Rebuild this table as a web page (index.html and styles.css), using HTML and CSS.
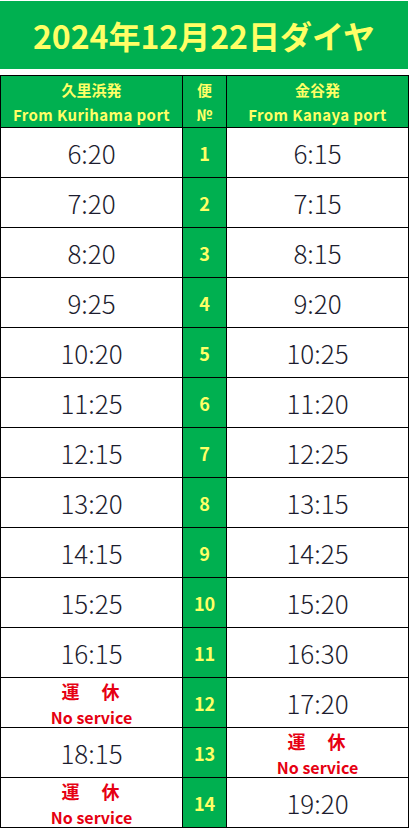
FILE: index.html
```html
<!DOCTYPE html>
<html lang="ja">
<head>
    <meta charset="UTF-8">
    <meta name="viewport" content="width=device-width, initial-scale=1.0">
    <title>2024年12月22日ダイヤ</title>
    <link rel="stylesheet" href="styles.css">
</head>
<body>
    <div class="title">2024年12月22日ダイヤ</div>
    <table class="timetable">
        <colgroup>
            <col class="col-side">
            <col class="col-no">
            <col class="col-side">
        </colgroup>
        <thead>
            <tr>
                <th><span class="jp">久里浜発</span><span class="en">From Kurihama port</span></th>
                <th><span class="jp">便</span><span class="en">№</span></th>
                <th><span class="jp">金谷発</span><span class="en">From Kanaya port</span></th>
            </tr>
        </thead>
        <tbody>
            <tr><td>6:20</td><td class="no">1</td><td>6:15</td></tr>
            <tr><td>7:20</td><td class="no">2</td><td>7:15</td></tr>
            <tr><td>8:20</td><td class="no">3</td><td>8:15</td></tr>
            <tr><td>9:25</td><td class="no">4</td><td>9:20</td></tr>
            <tr><td>10:20</td><td class="no">5</td><td>10:25</td></tr>
            <tr><td>11:25</td><td class="no">6</td><td>11:20</td></tr>
            <tr><td>12:15</td><td class="no">7</td><td>12:25</td></tr>
            <tr><td>13:20</td><td class="no">8</td><td>13:15</td></tr>
            <tr><td>14:15</td><td class="no">9</td><td>14:25</td></tr>
            <tr><td>15:25</td><td class="no">10</td><td>15:20</td></tr>
            <tr><td>16:15</td><td class="no">11</td><td>16:30</td></tr>
            <tr><td class="off"><span class="jp">運　休</span><span class="en">No service</span></td><td class="no">12</td><td>17:20</td></tr>
            <tr><td>18:15</td><td class="no">13</td><td class="off"><span class="jp">運　休</span><span class="en">No service</span></td></tr>
            <tr><td class="off"><span class="jp">運　休</span><span class="en">No service</span></td><td class="no">14</td><td>19:20</td></tr>
        </tbody>
    </table>
</body>
</html>
```

FILE: styles.css
```css
body { margin: 0; background: #fff; font-family: "Noto Sans CJK JP", "Noto Sans", sans-serif; width: 409px; }
.title { margin: 1px 0 6px; width: 408px; height: 68px; background: #00b050; color: #ffff66; font-size: 32px; font-weight: bold; display: flex; align-items: center; justify-content: center; }
.timetable { width: 408px; border-collapse: collapse; table-layout: fixed; }
.col-side { width: 182px; }
.col-no { width: 44px; }
.timetable th, .timetable td { border: 1px solid #000; padding: 0; text-align: center; vertical-align: middle; }
.timetable th { height: 51px; background: #00b050; color: #ffff66; font-weight: bold; }
.timetable th span { display: block; font-size: 15px; line-height: 25px; }
.timetable th .en { letter-spacing: 0.4px; }
.timetable td { height: 49px; font-size: 26px; font-weight: 300; color: #1c1c2e; }
.timetable td.no { background: #00b050; color: #ffff66; font-size: 18px; font-weight: bold; }
.timetable td.off { color: #e60012; font-weight: bold; vertical-align: top; }
.off .jp { display: block; font-size: 18px; line-height: 20px; letter-spacing: 2px; padding-top: 3px; }
.off .en { display: block; font-size: 16px; line-height: 20px; padding-top: 6px; }
```
